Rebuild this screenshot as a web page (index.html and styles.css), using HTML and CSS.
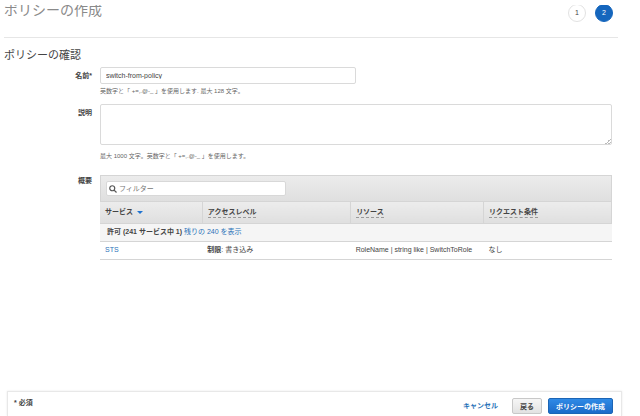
FILE: index.html
```
<!DOCTYPE html>
<html lang="ja">
  <head>
    <meta charset="UTF-8" />
    <meta name="viewport" content="width=device-width, initial-scale=1.0" />
    <title>ポリシーの作成</title>
    <link rel="stylesheet" href="styles.css">
  </head>
  <body>
    <header class="page-header">
      <h1>ポリシーの作成</h1>
      <div class="steps">
        <span class="step">1</span>
        <span class="step active">2</span>
      </div>
    </header>

    <main>
      <h2>ポリシーの確認</h2>
      <form id="policyForm" class="policy-form">
        <div class="row">
          <label for="name">名前*</label>
          <div class="field">
            <input type="text" id="name" class="name-input" value="switch-from-policy" />
            <p class="hint">英数字と「 +=,.@-_ 」を使用します. 最大 128 文字。</p>
          </div>
        </div>
        <div class="row description-row">
          <label for="description">説明</label>
          <div class="field">
            <textarea id="description"></textarea>
            <p class="hint">最大 1000 文字。英数字と「 +=,.@-_ 」を使用します。</p>
          </div>
        </div>
        <div class="row summary-row">
          <label for="filter">概要</label>
          <div class="field">
            <div class="toolbar">
              <div class="search">
                <svg viewBox="0 0 16 16" aria-hidden="true">
                  <circle cx="6.5" cy="6.5" r="5" />
                  <path d="M10.2 10.2 L15 15" />
                </svg>
                <input type="text" id="filter" placeholder="フィルター" />
              </div>
            </div>
            <table class="summary">
              <thead>
                <tr>
                  <th class="col-service">サービス <span class="arrow"></span></th>
                  <th class="col-access"><span class="term">アクセスレベル</span></th>
                  <th class="col-resource"><span class="term">リソース</span></th>
                  <th class="col-condition"><span class="term">リクエスト条件</span></th>
                </tr>
              </thead>
              <tbody>
                <tr class="group">
                  <td colspan="4"><b>許可 (241 サービス中 1)</b> <a href="#">残りの 240 を表示</a></td>
                </tr>
                <tr>
                  <td><a href="#">STS</a></td>
                  <td><b>制限</b>: 書き込み</td>
                  <td>RoleName | string like | SwitchToRole</td>
                  <td>なし</td>
                </tr>
              </tbody>
            </table>
          </div>
        </div>
      </form>
    </main>

    <footer class="page-footer">
      <span class="required">* 必須</span>
      <div class="actions">
        <a href="#" class="cancel">キャンセル</a>
        <button type="button" class="btn">戻る</button>
        <button type="submit" form="policyForm" class="btn primary">ポリシーの作成</button>
      </div>
    </footer>
  </body>
</html>
```

FILE: styles.css
```
* {
  box-sizing: border-box;
}
body {
  display: flex;
  flex-direction: column;
  min-height: 100vh;
  margin: 0;
  padding-top: 5px;
  background-color: #fff;
  color: #444;
  font-family: "Liberation Sans", "Noto Sans CJK JP", sans-serif;
  font-size: 7px;
  line-height: 10px;
}
h1,
h2,
p {
  margin: 0;
  font-weight: normal;
}
a {
  color: #2a73b8;
  text-decoration: none;
}
input,
textarea,
button {
  font-family: inherit;
  font-size: 7px;
  line-height: 13px;
  color: #444;
}

/* header, scrolled partly out of view */
.page-header {
  display: flex;
  justify-content: space-between;
  align-items: flex-end;
  height: 33px;
  margin: 0 22px 0 4px;
  padding-bottom: 15px;
  border-bottom: 1px solid #e6e6e6;
  overflow: hidden;
}
.page-header h1 {
  font-size: 14px;
  line-height: 20px;
  padding-bottom: 2px;
  color: #8a8a8a;
}
.steps {
  display: flex;
  gap: 9px;
  padding-right: 5px;
}
.step {
  width: 18px;
  height: 18px;
  border: 1px solid #e2e2e2;
  border-radius: 50%;
  line-height: 16px;
  text-align: center;
}
.step.active {
  border-color: #1566bd;
  background-color: #1566bd;
  color: #fff;
}

/* form */
main {
  flex: 1;
  padding: 9px 28px 0 4px;
}
main h2 {
  font-size: 11px;
  line-height: 16px;
}
.policy-form {
  display: flex;
  flex-direction: column;
  gap: 8px;
  padding-top: 4px;
}
.row {
  display: flex;
  gap: 8px;
}
.row label {
  width: 88px;
  padding-top: 4px;
  font-weight: bold;
  text-align: right;
}
.field {
  flex: 1;
}
.name-input {
  display: block;
  width: 50%;
  height: 17px;
  padding: 0 5px;
  border: 1px solid #dadada;
  border-radius: 2px;
}
textarea {
  display: block;
  width: 100%;
  height: 41px;
  border: 1px solid #dadada;
  border-radius: 2px;
}
textarea::-webkit-resizer {
  background: linear-gradient(135deg, transparent 50%, #bbb 50% 60%, transparent 60% 75%, #bbb 75% 85%, transparent 85%) right bottom / 6px 6px no-repeat;
}
.hint {
  padding-top: 2px;
  font-size: 6px;
  color: #666;
}
.description-row {
  padding-bottom: 6px;
}
.description-row .hint {
  padding-top: 6px;
}
.summary-row label {
  padding-top: 1px;
}

/* summary table */
.toolbar {
  padding: 5px;
  border: 1px solid #d5d5d5;
  background: linear-gradient(#ececec, #dfdfdf);
}
.search {
  display: flex;
  align-items: center;
  gap: 2px;
  width: 36%;
  height: 15px;
  padding: 0 2px;
  border: 1px solid #d8d8d8;
  border-radius: 2px;
  background-color: #fff;
}
.search svg {
  width: 8px;
  height: 8px;
  fill: none;
  stroke: #555;
  stroke-width: 2.4;
}
.search input {
  flex: 1;
  min-width: 0;
  padding: 0;
  border: none;
  outline: none;
}
.search input::placeholder {
  color: #777;
}
.summary {
  width: 100%;
  table-layout: fixed;
  border-collapse: collapse;
}
.summary th,
.summary td {
  height: 18px;
  padding: 0 5px;
  border-bottom: 1px solid #d5d5d5;
  text-align: left;
  white-space: nowrap;
}
.summary th {
  height: 21px;
  border-right: 1px solid #d5d5d5;
  background: linear-gradient(#ececec, #dfdfdf);
}
.summary .group td {
  padding-left: 7px;
  background-color: #f5f5f5;
}
.col-service {
  width: 20%;
}
.col-access {
  width: 29%;
}
.col-resource {
  width: 26%;
}
.col-condition {
  width: 25%;
}
.arrow {
  display: inline-block;
  margin-left: 2px;
  border: 3px solid transparent;
  border-top-color: #1f73d0;
  border-bottom: none;
  vertical-align: middle;
}
.term {
  display: inline-block;
  border-bottom: 1px dashed #999;
}

/* footer */
.page-footer {
  display: flex;
  justify-content: space-between;
  margin: 0 18px 0 7px;
  padding: 6px 8px 2px 6px;
  border: 1px solid #e8e8e8;
  border-bottom: none;
  box-shadow: 0 0 2px #e8e8e8;
}
.required {
  font-weight: bold;
}
.actions {
  display: flex;
  align-items: center;
  gap: 6px;
}
.cancel {
  padding-right: 8px;
  font-weight: bold;
}
.btn {
  height: 16px;
  padding: 0 7px;
  border: 1px solid #c8c8c8;
  border-radius: 2px;
  background: linear-gradient(#f6f6f6, #e2e2e2);
  font-weight: bold;
}
.btn.primary {
  border-color: #1c65b5;
  background: linear-gradient(#2f8ae6, #1c6bc9);
  color: #fff;
}
```
